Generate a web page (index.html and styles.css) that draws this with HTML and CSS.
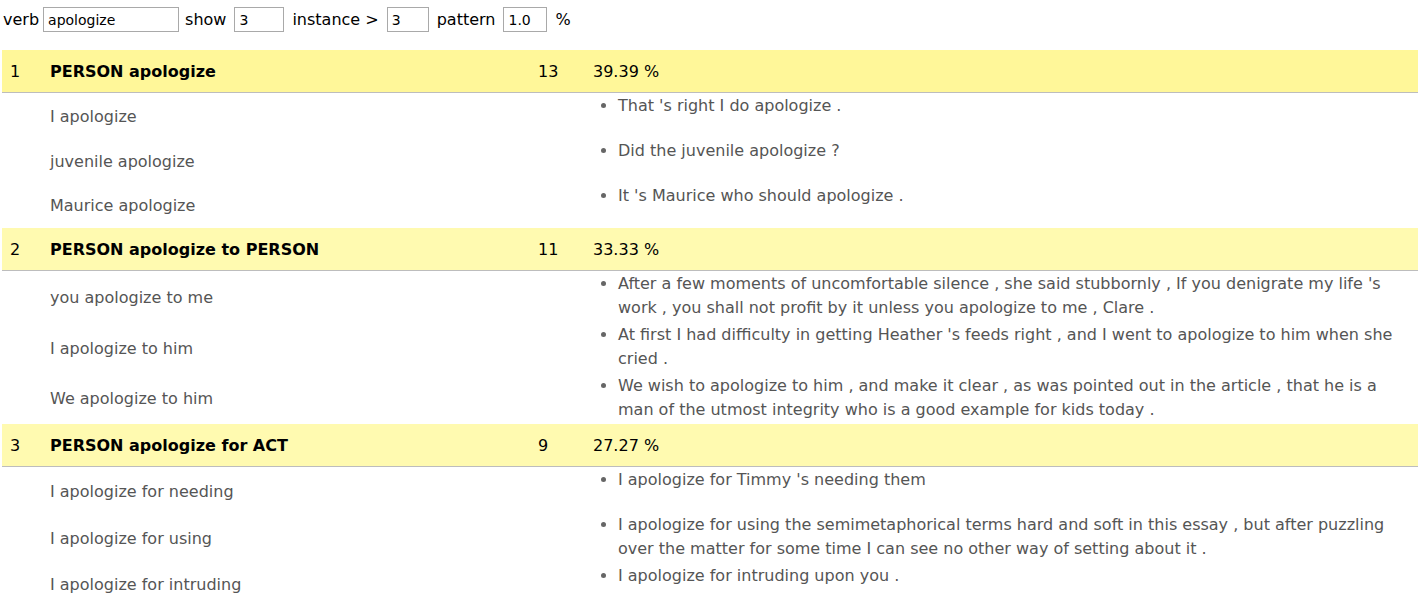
FILE: index.html
```html
<!DOCTYPE html>
<html>
<head>
<meta charset="utf-8">
<title>Verb patterns</title>
<link rel="stylesheet" href="styles.css">
</head>
<body>
<form class="query">
  <label class="lbl lbl-first">verb</label>
  <input class="field field-verb" type="text" value="apologize">
  <label class="lbl">show</label>
  <input class="field field-show" type="text" value="3">
  <label class="lbl">instance &gt;</label>
  <input class="field field-inst" type="text" value="3">
  <label class="lbl">pattern</label>
  <input class="field field-pat" type="text" value="1.0">
  <span class="lbl">%</span>
</form>

<div class="results">
  <div class="pattern">
    <div class="head head-hl">
      <span class="num">1</span>
      <span class="name">PERSON apologize</span>
      <span class="count">13</span>
      <span class="pct">39.39 %</span>
    </div>
    <div class="body">
      <div class="examples">
        <div class="ex">I apologize</div>
        <div class="ex">juvenile apologize</div>
        <div class="ex">Maurice apologize</div>
      </div>
      <ul class="sents">
        <li>That 's right I do apologize .</li>
        <li>Did the juvenile apologize ?</li>
        <li>It 's Maurice who should apologize .</li>
      </ul>
    </div>
  </div>

  <div class="pattern">
    <div class="head">
      <span class="num">2</span>
      <span class="name">PERSON apologize to PERSON</span>
      <span class="count">11</span>
      <span class="pct">33.33 %</span>
    </div>
    <div class="body">
      <div class="examples">
        <div class="ex">you apologize to me</div>
        <div class="ex">I apologize to him</div>
        <div class="ex">We apologize to him</div>
      </div>
      <ul class="sents">
        <li>After a few moments of uncomfortable silence , she said stubbornly , If you denigrate my life 's work , you shall not profit by it unless you apologize to me , Clare .</li>
        <li>At first I had difficulty in getting Heather 's feeds right , and I went to apologize to him when she cried .</li>
        <li>We wish to apologize to him , and make it clear , as was pointed out in the article , that he is a man of the utmost integrity who is a good example for kids today .</li>
      </ul>
    </div>
  </div>

  <div class="pattern">
    <div class="head">
      <span class="num">3</span>
      <span class="name">PERSON apologize for ACT</span>
      <span class="count">9</span>
      <span class="pct">27.27 %</span>
    </div>
    <div class="body">
      <div class="examples">
        <div class="ex">I apologize for needing</div>
        <div class="ex">I apologize for using</div>
        <div class="ex">I apologize for intruding</div>
      </div>
      <ul class="sents">
        <li>I apologize for Timmy 's needing them</li>
        <li>I apologize for using the semimetaphorical terms hard and soft in this essay , but after puzzling over the matter for some time I can see no other way of setting about it .</li>
        <li>I apologize for intruding upon you .</li>
      </ul>
    </div>
  </div>
</div>
</body>
</html>
```

FILE: styles.css
```css
html, body {
  margin: 0;
  padding: 0;
  background: #ffffff;
}

body {
  font-family: "DejaVu Sans", Verdana, sans-serif;
  font-size: 16px;
  color: #000;
}

.query {
  display: flex;
  align-items: center;
  padding: 7px 3px 0 3px;
  height: 25px;
  margin: 0 0 18px 0;
}

.lbl {
  font-size: 16px;
  line-height: 25px;
  margin-right: 8px;
}

.lbl-first {
  margin-right: 4px;
}

.field {
  box-sizing: border-box;
  height: 25px;
  border: 1px solid #a9a9a9;
  padding: 1px 4px 0 4px;
  font-family: "DejaVu Sans", Verdana, sans-serif;
  font-size: 14px;
  color: #000;
  margin-right: 8px;
  background: #fff;
}

.field-verb { width: 136px; margin-right: 6px; }
.field-show { width: 50px; }
.field-inst { width: 42px; }
.field-pat  { width: 44px; }

.results {
  margin: 0 3px 0 2px;
}

.head {
  display: grid;
  grid-template-columns: 48px 488px 55px 1fr;
  align-items: center;
  height: 42px;
  background: #fffab0;
  border-bottom: 1px solid #bdbdbd;
}

.head-hl {
  background: #fff799;
}

.num {
  padding-left: 8px;
}

.name {
  font-weight: bold;
}

.body {
  display: grid;
  grid-template-columns: 48px 543px 1fr;
  color: #555;
}

.examples {
  grid-column: 2;
  display: flex;
  flex-direction: column;
  padding-top: 1px;
}

.ex {
  flex: 1;
  display: flex;
  align-items: center;
}

.sents {
  grid-column: 3;
  margin: 0;
  padding: 0 8px 0 25px;
  list-style: disc;
}

.sents li {
  line-height: 24px;
  min-height: 42px;
  padding-top: 1px;
  padding-bottom: 2px;
}

.sents li::marker {
  color: #666;
}
```
